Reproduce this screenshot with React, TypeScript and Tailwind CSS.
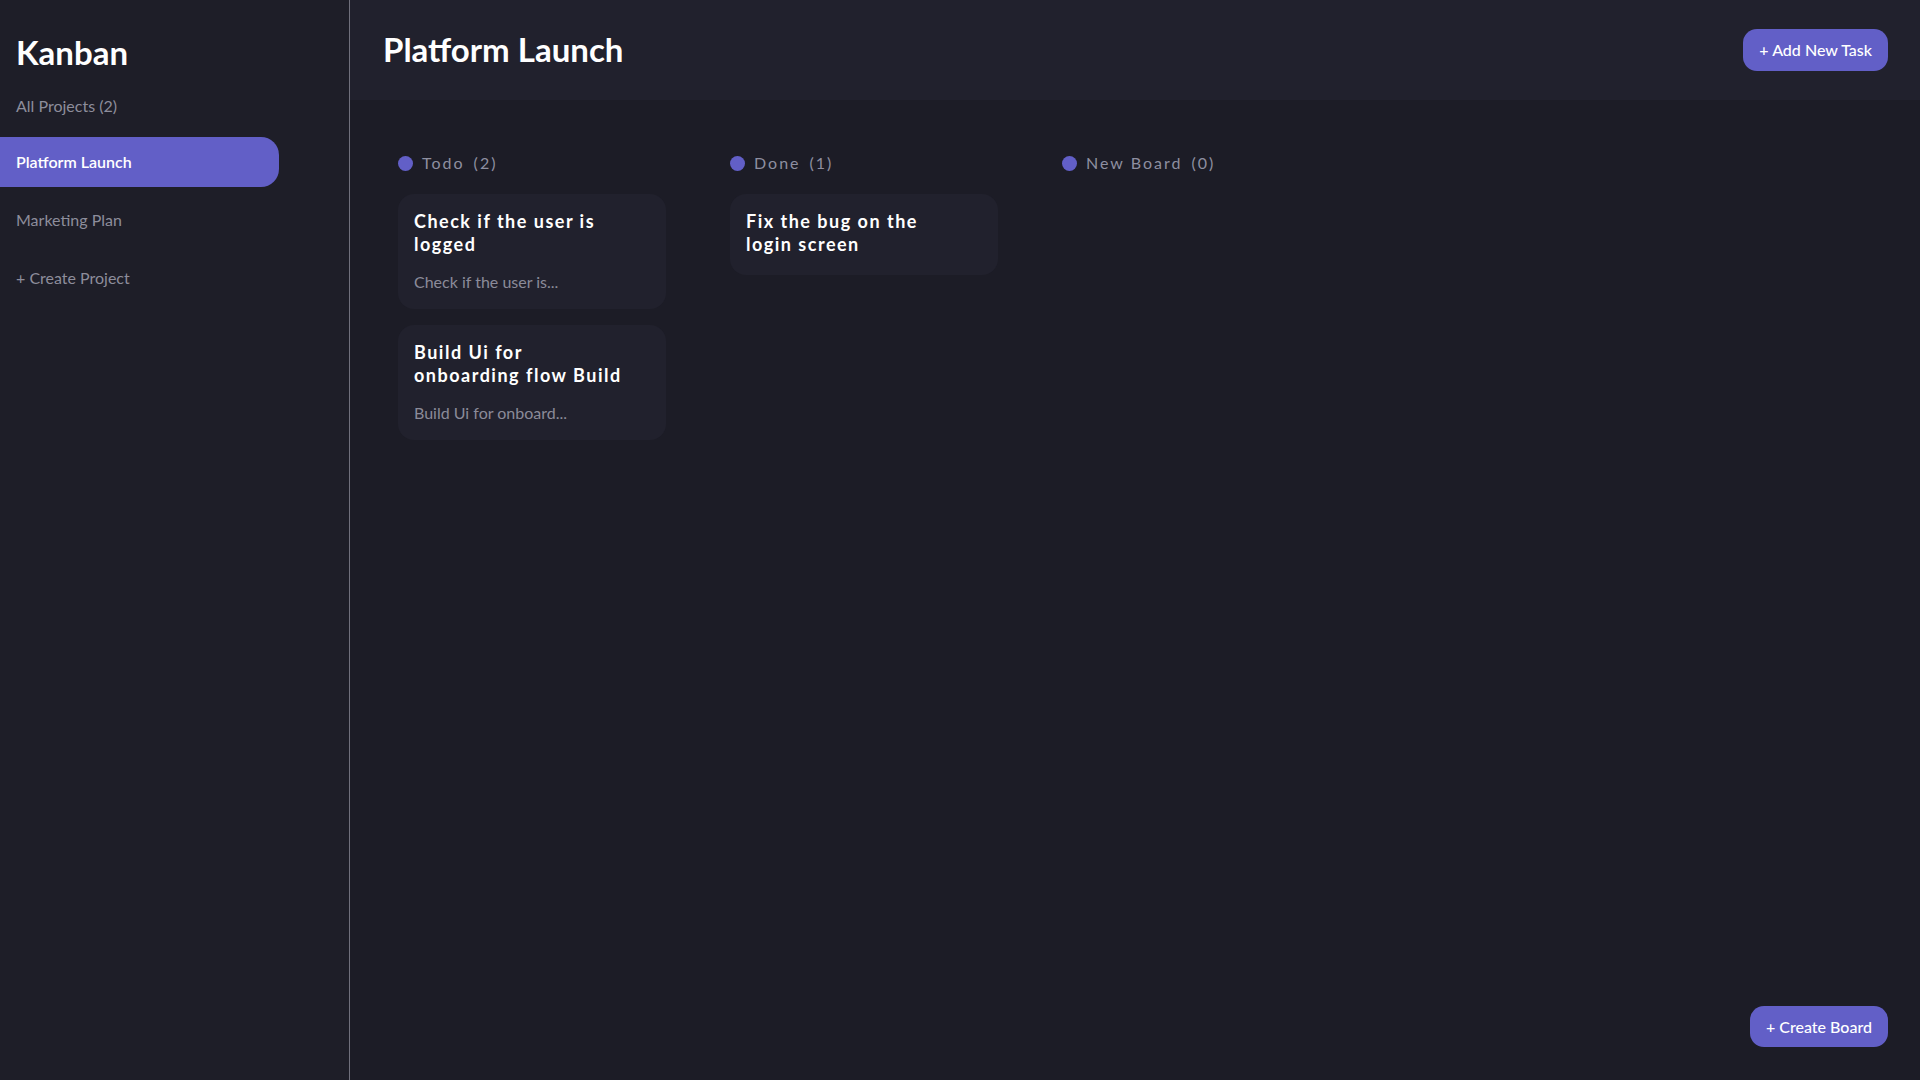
import React from "react";

const projects = [
  { name: "Platform Launch", active: true },
  { name: "Marketing Plan", active: false },
];

const columns = [
  {
    name: "Todo",
    tasks: [
      { title: "Check if the user is logged", desc: "Check if the user is..." },
      { title: "Build Ui for onboarding flow Build", desc: "Build Ui for onboard..." },
    ],
  },
  {
    name: "Done",
    tasks: [{ title: "Fix the bug on the login screen", desc: "" }],
  },
  { name: "New Board", tasks: [] as { title: string; desc: string }[] },
];

export default function App() {
  return (
    <div
      className="relative flex h-screen w-full bg-[#1c1c26] text-white overflow-hidden"
      style={{ fontFamily: "Lato, 'Open Sans', sans-serif" }}
    >
      <aside className="w-[350px] shrink-0 border-r border-[#70707c] bg-[#1e1e28] pt-[30px]">
        <h1 className="px-4 text-[33px] font-bold leading-[44px]">Kanban</h1>
        <p className="mt-[20px] px-4 text-[16px] leading-[24px] text-[#8d8d9b]">
          All Projects (2)
        </p>
        <nav className="mt-[19px] flex flex-col">
          {projects.map((p) =>
            p.active ? (
              <div
                key={p.name}
                className="flex h-[50px] w-[279px] items-center rounded-r-[18px] bg-[#625fc7] px-4 text-[16px] font-semibold"
              >
                {p.name}
              </div>
            ) : (
              <div
                key={p.name}
                className="flex h-[66px] items-center px-4 text-[16px] text-[#8d8d9b]"
              >
                {p.name}
              </div>
            )
          )}
          <div className="flex h-[50px] items-center px-4 text-[16px] text-[#8d8d9b]">
            + Create Project
          </div>
        </nav>
      </aside>

      <main className="flex flex-1 flex-col">
        <header className="flex h-[100px] shrink-0 items-center justify-between bg-[#21212d] pl-[33px] pr-[32px]">
          <h2 className="text-[33px] font-bold">Platform Launch</h2>
          <button className="h-[42px] rounded-[14px] bg-[#625fc7] px-4 text-[16px] font-medium text-white">
            + Add New Task
          </button>
        </header>

        <section className="flex gap-[64px] pl-[48px] pt-[51px]">
          {columns.map((col) => (
            <div key={col.name} className="w-[268px]">
              <div className="mb-[19px] flex h-[24px] items-center gap-[9px] text-[16px] tracking-[2px] text-[#8e8fa0]">
                <span className="h-[15px] w-[15px] rounded-full bg-[#625fc7]" />
                <span>{col.name}</span>
                <span>({col.tasks.length})</span>
              </div>
              <div className="flex flex-col gap-[16px]">
                {col.tasks.map((t) => (
                  <div
                    key={t.title}
                    className={
                      t.desc
                        ? "rounded-[16px] bg-[#21212d] pb-[15px] pl-4 pr-4 pt-[16px]"
                        : "rounded-[16px] bg-[#21212d] pb-[19px] pl-4 pr-4 pt-[16px]"
                    }
                  >
                    <p className="pr-[22px] text-[18px] font-bold leading-[23px] tracking-[1.5px]">
                      {t.title}
                    </p>
                    {t.desc && (
                      <p className="mt-[14px] text-[16px] leading-[24px] text-[#8b8b99]">
                        {t.desc}
                      </p>
                    )}
                  </div>
                ))}
              </div>
            </div>
          ))}
        </section>
      </main>

      <button className="absolute bottom-[33px] right-[32px] h-[41px] rounded-[14px] bg-[#625fc7] px-4 text-[16px] font-medium text-white">
        + Create Board
      </button>
    </div>
  );
}
